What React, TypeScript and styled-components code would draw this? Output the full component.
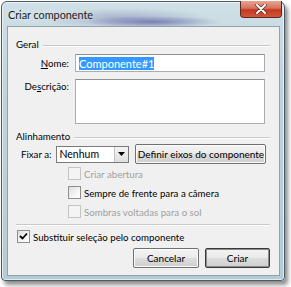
import React from "react";
import styled, { createGlobalStyle } from "styled-components";

const Global = createGlobalStyle`
  html, body { margin: 0; padding: 0; background: #ffffff; }
  body { font-family: Lato, "Noto Sans", sans-serif; }
`;

const Stage = styled.div`
  width: 291px;
  height: 287px;
  padding: 1px 0 0 1px;
  box-sizing: border-box;
`;

const Window = styled.div`
  position: relative;
  width: 284px;
  height: 280px;
  box-sizing: border-box;
  border: 1px solid #4a5a66;
  border-radius: 6px 6px 4px 4px;
  background:
    radial-gradient(ellipse 70px 6px at 150px 20px, rgba(70, 70, 150, 0.55), transparent),
    radial-gradient(ellipse 90px 10px at 120px 16px, rgba(120, 110, 170, 0.4), transparent),
    linear-gradient(180deg, #cfe0e6 0%, #bfd5dc 30%, #b4ccd4 100%);
  box-shadow: 3px 4px 4px rgba(0, 0, 0, 0.45), inset 0 0 0 1px rgba(255,255,255,0.6);
  display: flex;
  flex-direction: column;
`;

const TitleBar = styled.div`
  height: 24px;
  display: flex;
  align-items: flex-start;
  padding-left: 6px;
`;

const Title = styled.span`
  font-size: 10.8px;
  color: #1a1a1a;
  margin-top: 6px;
  text-shadow: 0 0 6px rgba(255,255,255,0.9);
`;

const CloseButton = styled.div`
  position: absolute;
  top: -1px;
  right: 2px;
  width: 42px;
  height: 17px;
  box-sizing: border-box;
  border: 1px solid #5a2a20;
  border-top: none;
  border-radius: 0 0 4px 4px;
  background: linear-gradient(180deg, #e8a493 0%, #d8715a 45%, #c23a1f 55%, #d2553a 100%);
  display: flex;
  align-items: center;
  justify-content: center;
`;

const ClientFrame = styled.div`
  flex: 1;
  padding: 0 4px 4px 5px;
  display: flex;
`;

const Client = styled.div`
  flex: 1;
  box-sizing: border-box;
  border: 1px solid #8fa3ad;
  background: #f0f0f0;
  padding: 11px 9px 0 8px;
  display: flex;
  flex-direction: column;
  font-size: 9.7px;
  color: #000;
`;

const SectionHeader = styled.div<{ $top?: number }>`
  display: flex;
  align-items: center;
  height: 12px;
  margin-top: ${(p) => p.$top ?? 0}px;
`;

const SectionLine = styled.div`
  flex: 1;
  height: 0;
  border-top: 1px solid #c8c8c8;
  border-bottom: 1px solid #ffffff;
  margin-left: 4px;
  margin-top: 3px;
`;

const FieldRow = styled.div<{ $top: number }>`
  display: flex;
  align-items: flex-start;
  margin-top: ${(p) => p.$top}px;
`;

const FieldLabel = styled.label<{ $pad: number }>`
  width: 53px;
  text-align: right;
  padding-top: ${(p) => p.$pad}px;
  margin-right: 6px;
`;

const TextBox = styled.div<{ $h: number }>`
  width: 190px;
  height: ${(p) => p.$h}px;
  box-sizing: border-box;
  border: 1px solid #abadb3;
  border-top-color: #8e8f8f;
  background: #fff;
  padding: 2px 3px;
  display: flex;
  align-items: flex-start;
`;

const Selected = styled.span`
  background: #3399ff;
  color: #fff;
  font-size: 11px;
  line-height: 13px;
`;

const Mn = styled.span`
  text-decoration: underline;
`;

const AlignRow = styled.div`
  display: flex;
  align-items: center;
  margin-top: 2px;
  padding-left: 5px;
`;

const Select = styled.div`
  width: 73px;
  height: 17px;
  box-sizing: border-box;
  border: 1px solid #7a7a7a;
  background: #fff;
  margin-left: 5px;
  display: flex;
  align-items: center;
  padding-left: 2px;
  font-size: 10.5px;
`;

const SelectText = styled.span`
  flex: 1;
`;

const SelectArrow = styled.div`
  width: 14px;
  height: 15px;
  box-sizing: border-box;
  border-left: 1px solid #c0c0c0;
  background: linear-gradient(180deg, #f4f4f4, #dedede);
  display: flex;
  align-items: center;
  justify-content: center;
`;

const Button = styled.div<{ $w: number; $default?: boolean }>`
  width: ${(p) => p.$w}px;
  height: 20px;
  box-sizing: border-box;
  border: 1px solid ${(p) => (p.$default ? "#3a3a3a" : "#707070")};
  border-radius: 2px;
  box-shadow: ${(p) => (p.$default ? "inset 0 0 0 1px #8c8c8c" : "inset 0 0 0 1px #fcfcfc")};
  background: linear-gradient(180deg, #f3f3f3 0%, #ebebeb 48%, #dddddd 52%, #cfcfcf 100%);
  display: flex;
  align-items: center;
  justify-content: center;
  white-space: nowrap;
  font-size: 10px;
`;

const CheckList = styled.div`
  display: flex;
  flex-direction: column;
  gap: 6px;
  margin-top: 3px;
  padding-left: 52px;
`;

const CheckRow = styled.div<{ $disabled?: boolean }>`
  display: flex;
  align-items: center;
  height: 13px;
  color: ${(p) => (p.$disabled ? "#a0a0a0" : "#000")};
`;

const Box = styled.div<{ $disabled?: boolean }>`
  width: 13px;
  height: 13px;
  box-sizing: border-box;
  border: 1px solid ${(p) => (p.$disabled ? "#c4c4c4" : "#8e8f8f")};
  background: ${(p) =>
    p.$disabled ? "#f4f4f4" : "linear-gradient(135deg, #dcdcdc 0%, #f6f6f6 60%, #ffffff 100%)"};
  margin-right: 3px;
  display: flex;
  align-items: center;
  justify-content: center;
`;

const Separator = styled.div`
  margin-top: 6px;
  border-top: 1px solid #c8c8c8;
  border-bottom: 1px solid #fff;
`;

const ReplaceRow = styled(CheckRow)`
  margin-top: 4px;
  padding-left: 1px;
`;

const Footer = styled.div`
  display: flex;
  justify-content: flex-end;
  gap: 6px;
  margin-top: 5px;
`;

export default function App() {
  return (
    <>
      <Global />
      <Stage>
        <Window>
          <TitleBar>
            <Title>Criar componente</Title>
          </TitleBar>
          <CloseButton>
            <svg width="12" height="10" viewBox="0 0 12 10">
              <path d="M2 1 L10 9 M10 1 L2 9" stroke="#4a2a24" strokeWidth="3.2" strokeLinecap="round" />
              <path d="M2 1 L10 9 M10 1 L2 9" stroke="#ffffff" strokeWidth="2" strokeLinecap="round" />
            </svg>
          </CloseButton>
          <ClientFrame>
            <Client>
              <SectionHeader>
                Geral
                <SectionLine />
              </SectionHeader>
              <FieldRow $top={4}>
                <FieldLabel $pad={3}>
                  <Mn>N</Mn>ome:
                </FieldLabel>
                <TextBox $h={18}>
                  <Selected>Componente#1</Selected>
                </TextBox>
              </FieldRow>
              <FieldRow $top={7}>
                <FieldLabel $pad={1}>
                  De<Mn>s</Mn>crição:
                </FieldLabel>
                <TextBox $h={45} />
              </FieldRow>
              <SectionHeader $top={6}>
                Alinhamento
                <SectionLine />
              </SectionHeader>
              <AlignRow>
                Fixar a:
                <Select>
                  <SelectText>Nenhum</SelectText>
                  <SelectArrow>
                    <svg width="7" height="4" viewBox="0 0 7 4">
                      <path d="M0 0 H7 L3.5 4 Z" fill="#000" />
                    </svg>
                  </SelectArrow>
                </Select>
                <Button $w={131} style={{ marginLeft: 6 }}>
                  Definir eixos do componente
                </Button>
              </AlignRow>
              <CheckList>
                <CheckRow $disabled>
                  <Box $disabled />
                  Criar abertura
                </CheckRow>
                <CheckRow>
                  <Box />
                  Sempre de frente para a câmera
                </CheckRow>
                <CheckRow $disabled>
                  <Box $disabled />
                  Sombras voltadas para o sol
                </CheckRow>
              </CheckList>
              <Separator />
              <ReplaceRow>
                <Box>
                  <svg width="9" height="9" viewBox="0 0 9 9">
                    <path d="M1 4 L3.5 6.5 L8 1.5" stroke="#000" strokeWidth="1.8" fill="none" />
                  </svg>
                </Box>
                Substituir seleção pelo componente
              </ReplaceRow>
              <Footer>
                <Button $w={66}>Cancelar</Button>
                <Button $w={65} $default>
                  Criar
                </Button>
              </Footer>
            </Client>
          </ClientFrame>
        </Window>
      </Stage>
    </>
  );
}
